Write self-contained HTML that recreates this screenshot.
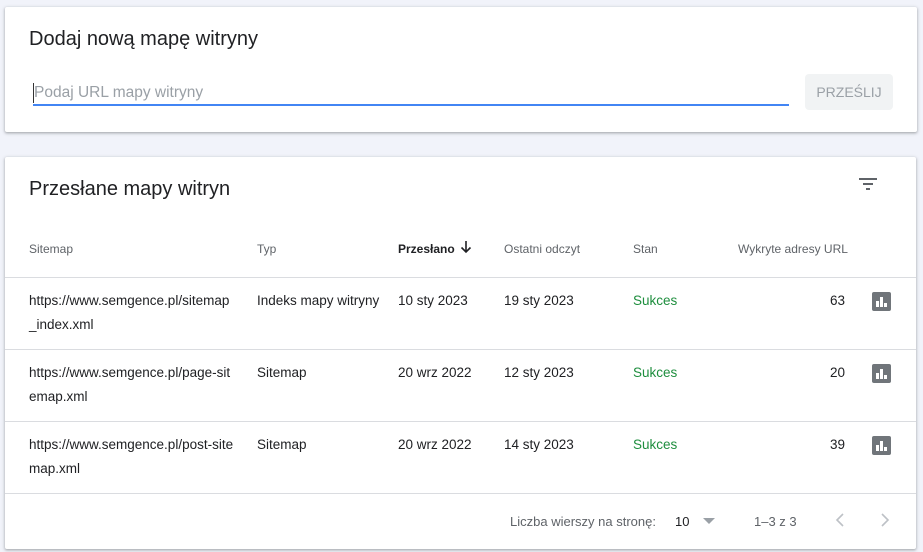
<!DOCTYPE html>
<html><head><meta charset="utf-8"><style>
*{margin:0;padding:0;box-sizing:border-box}
body{width:923px;height:552px;background:#f1f3fa;font-family:"Liberation Sans",sans-serif;position:relative;overflow:hidden;color:#202124}
.card{position:absolute;background:#fff;box-shadow:0 1px 2px rgba(60,64,67,.3),0 1px 3px 1px rgba(60,64,67,.15);border-radius:2px}
.a{position:absolute;white-space:nowrap}
.t{font-size:20px;color:#202124}
.h{font-size:12px;color:#5f6368}
.c{font-size:13.5px;color:#202124}
.g{color:#1e8e3e}
.line{position:absolute;left:0;right:0;height:1px;background:#dadce0}
.ic{position:absolute;left:867px;width:19px;height:19px;background:#70757a;border-radius:2px}
.ic i{position:absolute;bottom:4px;width:2.5px;background:#fff}
</style></head><body>
<div class="card" style="left:5px;top:7px;width:912px;height:125px">
 <div class="a t" style="left:24px;top:21px">Dodaj nową mapę witryny</div>
 <div class="a" style="left:28px;top:76px;width:1px;height:20px;background:#333"></div>
 <div class="a" style="left:29px;top:77px;font-size:15.5px;color:#9aa0a6">Podaj URL mapy witryny</div>
 <div class="a" style="left:28px;top:97px;width:756px;height:2px;background:#4285f4"></div>
 <div class="a" style="left:800px;top:67px;width:88px;height:36px;background:#f1f3f4;border-radius:4px;color:#9aa0a6;font-size:14px;text-align:center;line-height:36px">PRZEŚLIJ</div>
</div>
<div class="card" style="left:5px;top:157px;width:911px;height:392px">
 <div class="a t" style="left:24px;top:21px">Przesłane mapy witryn</div>
 <svg class="a" style="left:853px;top:20px" width="20" height="16" viewBox="0 0 20 16"><rect x="1" y="1" width="18" height="2" fill="#5f6368"/><rect x="5" y="6" width="10" height="2" fill="#5f6368"/><rect x="8" y="11" width="4" height="2" fill="#5f6368"/></svg>
 <div class="a h" style="left:24px;top:85px">Sitemap</div>
 <div class="a h" style="left:252px;top:85px">Typ</div>
 <div class="a h" style="left:393px;top:85px;color:#202124;font-weight:bold">Przesłano</div>
 <svg class="a" style="left:455px;top:83px" width="12" height="14" viewBox="0 0 12 14"><path d="M6 1v11M1.5 7.5L6 12l4.5-4.5" stroke="#202124" stroke-width="1.6" fill="none"/></svg>
 <div class="a h" style="left:499px;top:85px">Ostatni odczyt</div>
 <div class="a h" style="left:628px;top:85px">Stan</div>
 <div class="a h" style="left:733px;top:85px">Wykryte adresy URL</div>
 <div class="line" style="top:120px"></div>

 <div class="a c" style="left:24px;top:132px;line-height:24px">https://www.semgence.pl/sitemap<br>_index.xml</div>
 <div class="a c" style="left:252px;top:132px;line-height:24px">Indeks mapy witryny</div>
 <div class="a c" style="left:393px;top:132px;line-height:24px">10 sty 2023</div>
 <div class="a c" style="left:499px;top:132px;line-height:24px">19 sty 2023</div>
 <div class="a c g" style="left:628px;top:132px;line-height:24px">Sukces</div>
 <div class="a c" style="left:780px;width:60px;text-align:right;top:132px;line-height:24px">63</div>
 <div class="ic" style="top:135px"><i style="left:4px;height:6px"></i><i style="left:8px;height:10px"></i><i style="left:12px;height:4px"></i></div>
 <div class="line" style="top:192px"></div>

 <div class="a c" style="left:24px;top:204px;line-height:24px">https://www.semgence.pl/page-sit<br>emap.xml</div>
 <div class="a c" style="left:252px;top:204px;line-height:24px">Sitemap</div>
 <div class="a c" style="left:393px;top:204px;line-height:24px">20 wrz 2022</div>
 <div class="a c" style="left:499px;top:204px;line-height:24px">12 sty 2023</div>
 <div class="a c g" style="left:628px;top:204px;line-height:24px">Sukces</div>
 <div class="a c" style="left:780px;width:60px;text-align:right;top:204px;line-height:24px">20</div>
 <div class="ic" style="top:207px"><i style="left:4px;height:6px"></i><i style="left:8px;height:10px"></i><i style="left:12px;height:4px"></i></div>
 <div class="line" style="top:264px"></div>

 <div class="a c" style="left:24px;top:276px;line-height:24px">https://www.semgence.pl/post-site<br>map.xml</div>
 <div class="a c" style="left:252px;top:276px;line-height:24px">Sitemap</div>
 <div class="a c" style="left:393px;top:276px;line-height:24px">20 wrz 2022</div>
 <div class="a c" style="left:499px;top:276px;line-height:24px">14 sty 2023</div>
 <div class="a c g" style="left:628px;top:276px;line-height:24px">Sukces</div>
 <div class="a c" style="left:780px;width:60px;text-align:right;top:276px;line-height:24px">39</div>
 <div class="ic" style="top:279px"><i style="left:4px;height:6px"></i><i style="left:8px;height:10px"></i><i style="left:12px;height:4px"></i></div>
 <div class="line" style="top:336px"></div>

 <div class="a" style="left:505px;top:357px;font-size:13px;color:#5f6368">Liczba wierszy na stronę:</div>
 <div class="a" style="left:670px;top:357px;font-size:13px;color:#202124">10</div>
 <svg class="a" style="left:698px;top:361px" width="12" height="7"><path d="M0 0h12L6 6z" fill="#9aa0a6"/></svg>
 <div class="a" style="left:749px;top:357px;font-size:13px;color:#5f6368">1–3 z 3</div>
 <svg class="a" style="left:830px;top:356px" width="10" height="14"><path d="M8 1L2 7l6 6" stroke="#bdc1c6" stroke-width="1.6" fill="none"/></svg>
 <svg class="a" style="left:875px;top:356px" width="10" height="14"><path d="M2 1l6 6-6 6" stroke="#bdc1c6" stroke-width="1.6" fill="none"/></svg>
</div>
</body></html>
